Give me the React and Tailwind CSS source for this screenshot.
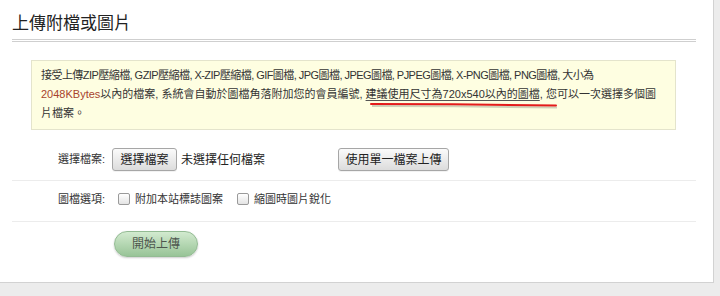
import React from "react";

const font = "font-['Liberation_Sans','Noto_Sans_CJK_TC',sans-serif]";

const GrayButton = ({ children, className = "" }) => (
  <button
    className={`h-[23px] rounded-[3px] border border-[#a6a6a6] bg-gradient-to-b from-[#fbfbfb] to-[#dcdcdc] text-[12px] leading-none text-[#222] shadow-[0_1px_0_rgba(0,0,0,0.05)] ${className}`}
  >
    {children}
  </button>
);

const Checkbox = () => (
  <span className="inline-block w-[12px] h-[12px] rounded-[2px] border border-[#9a9a9a] bg-gradient-to-b from-white to-[#e4e4e4]" />
);

const App = () => {
  return (
    <div className={`min-h-screen bg-[#ececec] ${font}`}>
      <div className="w-[714px] h-[283px] bg-white border-r border-b border-[#d2d2d2] pl-3 pr-[17px] pt-3">
        {/* Title */}
        <h2 className="text-[17px] leading-[24px] text-[#222] pb-[3px] border-b-[3px] border-double border-[#cfcfcf]">
          上傳附檔或圖片
        </h2>

        {/* Notice box */}
        <div className="relative mt-[18px] ml-[19px] mr-[20px] border border-[#e4e4cc] bg-[#fefee1] pl-[9px] pr-[8px] pt-[5px] pb-[6px] text-[11px] leading-[19px] text-[#333] whitespace-nowrap">
          <span className="tracking-[-0.55px]">
            接受上傳ZIP壓縮檔, GZIP壓縮檔, X-ZIP壓縮檔, GIF圖檔, JPG圖檔, JPEG圖檔, PJPEG圖檔, X-PNG圖檔, PNG圖檔, 大小為
          </span>
          <br />
          <span className="text-[#a8432e]">2048KBytes</span>以內的檔案, 系統會自動於圖檔角落附加您的會員編號,{" "}
          <span className="underline decoration-[#555] underline-offset-2">建議使用尺寸為720x540以內的圖檔</span>, 您可以一次選擇多個圖
          <br />
          片檔案。
          <svg
            className="absolute left-[338px] top-[40px] pointer-events-none"
            width="190"
            height="8"
            viewBox="0 0 190 8"
          >
            <path d="M1 3.5 C 60 3.5, 130 4, 186 5" stroke="rgba(0,0,0,0.18)" strokeWidth="2" fill="none" transform="translate(1,1.5)" />
            <path d="M1 3 C 60 3, 130 3.5, 186 4.5" stroke="#e41b1b" strokeWidth="2" strokeLinecap="round" fill="none" />
          </svg>
        </div>

        {/* File row */}
        <div className="flex items-center gap-[7px] pt-[18px] pb-[9px] border-b border-[#ececec]">
          <div className="w-[93px] text-right text-[11px] text-[#333]">選擇檔案:</div>
          <GrayButton className="w-[65px]">選擇檔案</GrayButton>
          <span className="-ml-[3px] text-[12px] text-[#222]">未選擇任何檔案</span>
          <GrayButton className="ml-[66px] w-[111px]">使用單一檔案上傳</GrayButton>
        </div>

        {/* Options row */}
        <div className="flex items-center h-[41px] pb-[4px] border-b border-[#ececec] text-[11px] text-[#333]">
          <div className="w-[93px] text-right">圖檔選項:</div>
          <div className="ml-[13px] flex items-center gap-[5px]">
            <Checkbox />
            <span className="text-[#333]">附加本站標誌圖案</span>
          </div>
          <div className="ml-[14px] flex items-center gap-[5px]">
            <Checkbox />
            <span className="text-[#333]">縮圖時圖片銳化</span>
          </div>
        </div>

        {/* Submit */}
        <div className="pt-[9px] pl-[102px]">
          <button className="w-[84px] h-[26px] rounded-full border border-[#93bb93] bg-gradient-to-b from-[#d2eacf] to-[#98c497] text-[12px] text-[#4e564e] shadow-[0_1px_2px_rgba(0,0,0,0.2)]">
            開始上傳
          </button>
        </div>
      </div>
    </div>
  );
};

export default App;
